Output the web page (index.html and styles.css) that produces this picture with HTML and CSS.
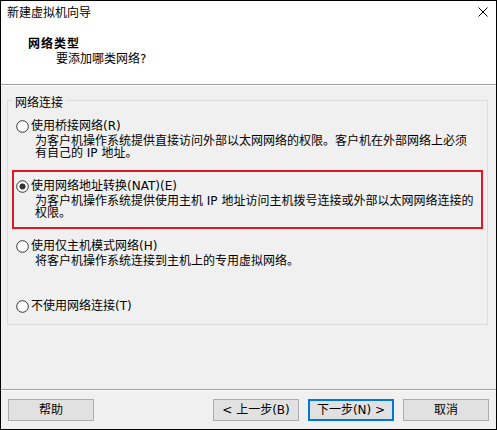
FILE: index.html
```html
<!DOCTYPE html>
<html lang="zh-CN">
<head>
<meta charset="utf-8">
<title>新建虚拟机向导</title>
<link rel="stylesheet" href="styles.css">
</head>
<body>
<div class="window">
  <header class="header">
    <div class="titlebar">
      <span class="title">新建虚拟机向导</span>
      <svg class="close" width="10" height="10" viewBox="0 0 10 10" aria-hidden="true">
        <path d="M0.5 0.5 L9.5 9.5 M9.5 0.5 L0.5 9.5" stroke="#000" stroke-width="1" fill="none"/>
      </svg>
    </div>
    <div class="heading">网络类型</div>
    <div class="subheading">要添加哪类网络?</div>
  </header>

  <main class="main">
    <fieldset class="group">
      <legend class="group-label">网络连接</legend>
      <div class="opts">
        <div class="opt opt--tall">
          <div class="opt-row">
            <svg class="radio" width="13" height="13" viewBox="0 0 13 13" aria-hidden="true">
              <circle cx="6.5" cy="6.5" r="5.8" fill="#fff" stroke="#333" stroke-width="1"/>
            </svg>
            <span class="opt-label">使用桥接网络(R)</span>
          </div>
          <div class="opt-desc">为客户机操作系统提供直接访问外部以太网网络的权限。客户机在外部网络上必须<br>有自己的 IP 地址。</div>
        </div>

        <div class="opt opt--tall opt--marked">
          <div class="opt-row">
            <svg class="radio" width="13" height="13" viewBox="0 0 13 13" aria-hidden="true">
              <circle cx="6.5" cy="6.5" r="5.8" fill="#fff" stroke="#333" stroke-width="1"/>
              <circle cx="6.5" cy="6.5" r="3" fill="#333"/>
            </svg>
            <span class="opt-label">使用网络地址转换(NAT)(E)</span>
          </div>
          <div class="opt-desc">为客户机操作系统提供使用主机 IP 地址访问主机拨号连接或外部以太网网络连接的<br>权限。</div>
        </div>

        <div class="opt opt--tall">
          <div class="opt-row">
            <svg class="radio" width="13" height="13" viewBox="0 0 13 13" aria-hidden="true">
              <circle cx="6.5" cy="6.5" r="5.8" fill="#fff" stroke="#333" stroke-width="1"/>
            </svg>
            <span class="opt-label">使用仅主机模式网络(H)</span>
          </div>
          <div class="opt-desc">将客户机操作系统连接到主机上的专用虚拟网络。</div>
        </div>

        <div class="opt">
          <div class="opt-row">
            <svg class="radio" width="13" height="13" viewBox="0 0 13 13" aria-hidden="true">
              <circle cx="6.5" cy="6.5" r="5.8" fill="#fff" stroke="#333" stroke-width="1"/>
            </svg>
            <span class="opt-label">不使用网络连接(T)</span>
          </div>
        </div>
      </div>
    </fieldset>
  </main>

  <footer class="footer">
    <button class="btn btn--help" type="button">帮助</button>
    <button class="btn" type="button">&lt; 上一步(B)</button>
    <button class="btn btn--primary" type="button">下一步(N) &gt;</button>
    <button class="btn" type="button">取消</button>
  </footer>
</div>
</body>
</html>
```

FILE: styles.css
```css
* {
  box-sizing: border-box;
}

html, body {
  margin: 0;
  padding: 0;
  background: #f0f0f0;
}

body {
  font-family: "DejaVu Sans", "Noto Sans CJK SC", sans-serif;
  font-size: 12px;
  color: #000;
}

.window {
  width: 497px;
  height: 430px;
  border: 1px solid #000;
  background: #f0f0f0;
  display: flex;
  flex-direction: column;
}

/* ---------- header ---------- */
.header {
  height: 84px;
  flex: none;
  background: #fff;
  border-bottom: 1px solid #a0a0a0;
  box-shadow: 0 1px 0 #fff;
  padding: 5px 8px 0 6px;
}

.titlebar {
  display: flex;
  justify-content: space-between;
  align-items: flex-start;
  height: 15px;
  line-height: 15px;
}

.close {
  display: block;
  margin-top: 1px;
}

.heading {
  margin-top: 16px;
  padding-left: 21px;
  line-height: 15px;
  font-weight: bold;
  letter-spacing: 1px;
}

.subheading {
  padding-left: 49px;
  line-height: 15px;
}

/* ---------- main ---------- */
.main {
  flex: 1;
  padding: 6px 8px 0 6px;
}

.group {
  margin: 0;
  padding: 1px 0 0 0;
  border: 1px solid #dcdcdc;
  min-width: 0;
}

.group-label {
  margin-left: 4px;
  padding: 7px 3px 0 3px;
  line-height: 11px;
}

.opts {
  display: flex;
  flex-direction: column;
  gap: 1px;
  padding: 0 4px;
}

.opt {
  border: 2px solid transparent;
  padding: 7px 4px 8px 2px;
}

.opt--tall {
  min-height: 59px;
}

.opt--marked {
  border-color: #e8161f;
}

.opt-row {
  display: flex;
  align-items: center;
  height: 15px;
  line-height: 15px;
}

.radio {
  display: block;
  flex: none;
  margin-top: -1px;
}

.opt-label {
  margin-left: 2px;
  white-space: nowrap;
}

.opt-desc {
  margin-top: 1px;
  padding-left: 19px;
  line-height: 12px;
  white-space: nowrap;
}

/* ---------- footer ---------- */
.footer {
  flex: none;
  height: 40px;
  border-top: 1px solid #a0a0a0;
  box-shadow: inset 0 1px 0 #fff;
  padding: 9px 7px 8px 7px;
  display: flex;
  gap: 9px;
}

.btn {
  width: 86px;
  height: 22px;
  padding: 0;
  margin: 0;
  background: #e1e1e1;
  border: 1px solid #adadad;
  border-radius: 0;
  font-family: inherit;
  font-size: 12px;
  color: #000;
  line-height: 15px;
}

.btn--help {
  margin-right: auto;
}

.btn--primary {
  border: 2px solid #0078d7;
}
```
